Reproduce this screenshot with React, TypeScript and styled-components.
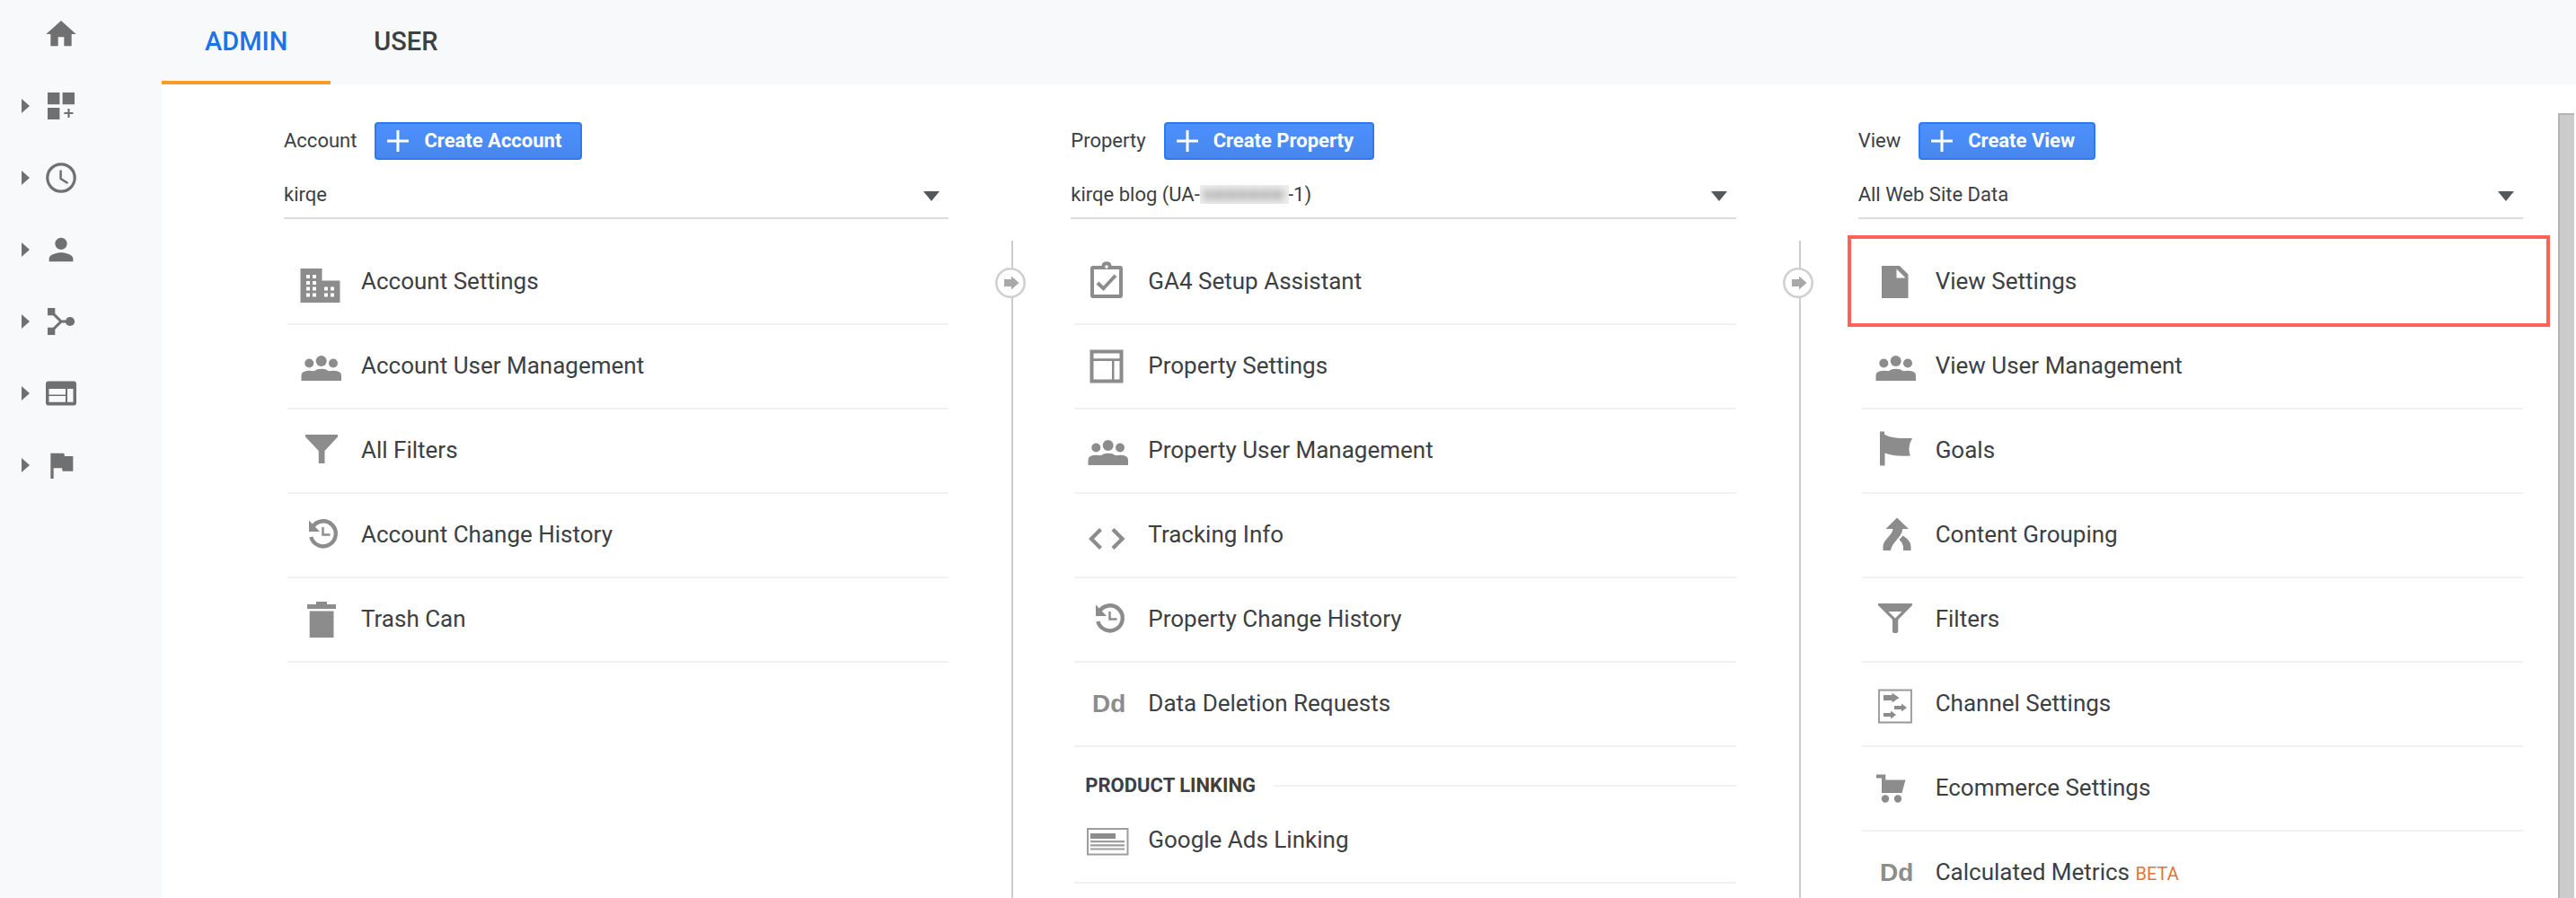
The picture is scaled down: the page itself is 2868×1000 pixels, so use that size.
import React, { useState } from "react";
import styled, { createGlobalStyle, css } from "styled-components";

const ink = "#3c4043";
const iconGrey = "#8c8c8c";
const railGrey = "#707070";

const GlobalStyle = createGlobalStyle`
  *, *::before, *::after { box-sizing: border-box; }
  body {
    margin: 0;
    background: #fff;
    color: ${ink};
    font-family: Roboto, "Liberation Sans", sans-serif;
    font-size: 22px;
  }
`;

const Shell = styled.div`
  display: flex;
  height: 100vh;
  overflow: hidden;
`;

const Rail = styled.nav`
  flex: 0 0 180px;
  display: flex;
  flex-direction: column;
  gap: 40px;
  padding: 18px 0 0 24px;
  background: #f8f9fb;
`;

const RailLink = styled.a`
  display: grid;
  grid-template-columns: 24px 40px;
  align-items: center;
  height: 40px;
  color: ${railGrey};

  > :last-child { grid-column: 2; }
`;

const Main = styled.main`
  flex: 1;
  min-width: 0;
  display: flex;
  flex-direction: column;
`;

const Tabs = styled.nav`
  display: flex;
  background: #f8f9fb;
`;

const Tab = styled.a<{ $active?: boolean }>`
  display: flex;
  align-items: center;
  height: 94px;
  padding: 2px 48px 0;
  border-bottom: 4px solid ${(p) => (p.$active ? "#f99b24" : "transparent")};
  color: ${(p) => (p.$active ? "#1a73e8" : ink)};
  font-size: 29px;
  font-weight: 500;
  text-decoration: none;
`;

const Body = styled.div`
  flex: 1;
  min-height: 0;
  display: flex;
`;

const Columns = styled.div`
  flex: 1;
  min-width: 0;
  display: grid;
  grid-template-columns: 1fr 136px 1fr 136px 1fr;
  padding: 42px 39px 0 136px;
`;

const ScrollThumb = styled.div`
  flex: 0 0 18px;
  margin: 32px 2px 0 0;
  border: solid #b4b4b4;
  border-width: 2px 0 0 2px;
  background: #ccc;
`;

const Column = styled.section`
  min-width: 0;
`;

const ColumnHead = styled.header`
  display: flex;
  align-items: center;
  gap: 20px;
`;

const ColumnLabel = styled.label`
  padding-bottom: 2px;
`;

const CreateButton = styled.button`
  display: flex;
  align-items: center;
  gap: 17px;
  height: 42px;
  padding: 0 21px 0 12px;
  border: 2px solid #3079ed;
  border-radius: 4px;
  background: linear-gradient(#4d90fe, #4787ed);
  color: #fff;
  font: 700 22px Roboto, "Liberation Sans", sans-serif;
  cursor: pointer;
`;

const ButtonText = styled.span`
  padding-bottom: 2px;
`;

const Picker = styled.div`
  position: relative;
  margin-top: 14px;
`;

const PickerSelect = styled.select`
  display: block;
  width: 100%;
  height: 52px;
  padding: 0 0 2px;
  appearance: none;
  border: 0;
  border-bottom: 2px solid #dcdcdc;
  border-radius: 0;
  background: none;
  color: ${ink};
  font: 22px Roboto, "Liberation Sans", sans-serif;
`;

const PickerArrow = styled.svg`
  position: absolute;
  right: 10px;
  top: 21px;
  pointer-events: none;
`;

const Redaction = styled.span`
  position: absolute;
  left: 144px;
  top: 14px;
  width: 99px;
  height: 21px;
  overflow: hidden;
  background: #f0f0f0;
  pointer-events: none;

  &::before {
    content: "";
    position: absolute;
    inset: 5px 4px 4px;
    background: repeating-linear-gradient(90deg, #b4b4b4 0 8px, #cdcdcd 8px 13px);
    filter: blur(4px);
  }
`;

const Divider = styled.div`
  position: relative;
  margin: 132px 0 0 70px;
  border-left: 2px solid #ccc;
`;

const DividerBadge = styled.svg`
  position: absolute;
  left: -20px;
  top: 30px;
`;

const List = styled.ul`
  margin: 24px 0 0;
  padding: 0 0 0 4px;
  list-style: none;
`;

const Item = styled.li<{ $highlight?: boolean }>`
  position: relative;
  border-bottom: 2px solid #f1f1f1;

  ${(p) =>
    p.$highlight &&
    css`
      &::after {
        content: "";
        position: absolute;
        inset: -6px -30px -4px -16px;
        border: 4px solid #ff6257;
        pointer-events: none;
      }
    `}
`;

const ItemLink = styled.a`
  display: flex;
  align-items: center;
  gap: 18px;
  height: 92px;
  padding-left: 12px;
  color: ${ink};
  font-size: 26px;
  text-decoration: none;
`;

const ItemIcon = styled.svg`
  flex: none;
  color: ${iconGrey};
`;

const ItemText = styled.span`
  padding-bottom: 2px;
`;

const Beta = styled.span`
  color: #e37435;
  font-size: 20px;
`;

const SectionTitle = styled.h3`
  display: flex;
  align-items: center;
  gap: 20px;
  margin: 0;
  padding: 30px 0 2px 12px;
  font-size: 22px;
  line-height: 26px;
  font-weight: 700;

  &::after {
    content: "";
    flex: 1;
    height: 2px;
    background: #f1f1f1;
  }
`;

const DdGlyph = () => (
  <text
    x="8"
    y="33"
    fontFamily='"Liberation Sans", sans-serif'
    fontSize="28"
    fontWeight="700"
    fill="currentColor"
  >
    Dd
  </text>
);

const icons: Record<string, React.ReactNode> = {
  building: (
    <path
      fillRule="evenodd"
      d="M2.500 9H26.500V22.500H46.500V47H2.500zM9 16v4h4v-4zM16 16v4h4v-4zM9 23v4h4v-4zM16 23v4h4v-4zM9 29.500v4h4v-4zM16 29.500v4h4v-4zM9 36.500v4h4v-4zM16 36.500v4h4v-4zM29 29.500v4h4v-4zM36 29.500v4h4v-4zM29 36.500v4h4v-4zM36 36.500v4h4v-4z"
    />
  ),
  people: (
    <>
      <circle cx="12.300" cy="20.500" r="5" />
      <circle cx="25.700" cy="18" r="6" />
      <circle cx="39" cy="20.500" r="5" />
      <path d="M3.500 40V34Q3.500 29 12 28.700Q16 28.700 17.500 29.200Q21 26.800 26 26.800Q31 26.800 34 29.200Q36 28.700 39.500 28.700Q48 29 48 34V40z" />
    </>
  ),
  funnel: <path d="M8 6H44V8.500L29.500 24V38H22.800V24L8 8.500z" />,
  history: (
    <>
      <path
        d="M15.600 15.500A14 14 0 1 1 14.300 26"
        fill="none"
        stroke="currentColor"
        strokeWidth="4.400"
      />
      <path d="M12 7.500L24 20H12z" />
      <path d="M27.500 15V23.500H35.500" fill="none" stroke="currentColor" strokeWidth="2.400" />
    </>
  ),
  trash: <path d="M10 7H20V4H32V7H42V12H10zM12.700 14.500H39.500V44H12.700z" />,
  clipboard: (
    <path
      fillRule="evenodd"
      d="M9 6H18.500A5.500 4.800 0 0 1 29.500 6H39A3 3 0 0 1 42 9V39A3 3 0 0 1 39 42H9A3 3 0 0 1 6 39V9A3 3 0 0 1 9 6zM24 5.200a1.800 1.800 0 1 0 .01 0zM10 10V38H38V10zM12.500 26.500L15.500 23.500L20.500 28.500L32.500 15.500L35.500 18L20.500 34z"
    />
  ),
  layout: (
    <path fillRule="evenodd" d="M5.500 5.500H42.500V42.500H5.500zM9.500 9.500V15.300H38.500V9.500zM9.500 18V38.500H30V18zM32.500 18V38.500H38.500V18z" />
  ),
  code: (
    <path
      d="M17.500 17.500L7 28L17.500 38.500M31 17.500L41.500 28L31 38.500"
      fill="none"
      stroke="currentColor"
      strokeWidth="4.200"
    />
  ),
  dd: <DdGlyph />,
  ads: (
    <>
      <path d="M3 11H47.500V39.500H3z" fill="none" stroke="currentColor" strokeWidth="2" opacity=".85" />
      <path d="M6 16H34V22H6z" />
      <path d="M6 25.200H44M6 29.300H44M6 33.500H44" stroke="currentColor" strokeWidth="2.200" opacity=".85" />
    </>
  ),
  doc: <path fillRule="evenodd" d="M10 6H30L39.500 15.500V42H10zM26.500 9.500V19.500H36.500z" />,
  flag: (
    <path d="M8 2.500H13V5.500C20 10.500 33 10 44 10Q38 20 42 29.500C32 30 22 30 13.500 26.500V40.500H8z" />
  ),
  merge: (
    <>
      <path d="M27 4.500L40 17H33.300C32.500 27 21.500 31 20 41H11.500V36C12 29 22 24 22.500 17H14.500z" />
      <path d="M29.500 29L33.500 24.500C40 28.500 42.500 32 42.500 37V41H34V38Q34 33 29.500 29z" />
    </>
  ),
  funnelOpen: (
    <path fillRule="evenodd" d="M6 6H44V8L28.300 24V37Q28.300 39 25 39Q22 39 22 37V24L6 8zM17.500 15L25 22.500L32.500 15z" />
  ),
  channels: (
    <>
      <path d="M7 8.500H43V44.500H7z" fill="none" stroke="currentColor" strokeWidth="1.800" opacity=".9" />
      <path d="M12 14H21.500V11.500L29.500 17L21.500 22.500V20H12zM24 26H32V23.500L38 28L32 32.500V30H24zM12 34H20V31.500L26 36L20 40.500V38H12z" />
    </>
  ),
  cart: (
    <>
      <path d="M4 8.500H14.300V14.500H36.500L32.500 29H10V12.500H4z" />
      <circle cx="14" cy="35.500" r="4.200" />
      <circle cx="28" cy="35.500" r="4.200" />
    </>
  ),
};

const Icon = ({ name }: { name: string }) => (
  <ItemIcon width="52" height="48" viewBox="0 0 52 48" fill="currentColor" aria-hidden="true">
    {icons[name]}
  </ItemIcon>
);

const material = (d: string) => <g transform="scale(1.6667)"><path d={d} /></g>;

const railItems: { label: string; expandable: boolean; art: React.ReactNode }[] = [
  { label: "Home", expandable: false, art: material("M10 20v-6h4v6h5v-8h3L12 3 2 12h3v8z") },
  {
    label: "Customization",
    expandable: true,
    art: <path d="M5 5H18.400V18.300H5zM21.600 5H35V18.300H21.600zM5 22H18.400V35H5zM27.400 23H29.600V26.900H33.400V29.100H29.600V33H27.400V29.100H23.400V26.900H27.400z" />,
  },
  {
    label: "Realtime",
    expandable: true,
    art: (
      <g fill="none" stroke="currentColor">
        <circle cx="20" cy="20" r="15.200" strokeWidth="3.200" />
        <path d="M19.600 11.500V21L27.500 26" strokeWidth="2.500" />
      </g>
    ),
  },
  {
    label: "Audience",
    expandable: true,
    art: material("M12 12c2.210 0 4-1.790 4-4s-1.790-4-4-4-4 1.790-4 4 1.790 4 4 4zm0 2c-2.670 0-8 1.340-8 4v2h16v-2c0-2.660-5.330-4-8-4z"),
  },
  {
    label: "Acquisition",
    expandable: true,
    art: (
      <>
        <path d="M5 5H13.300V13.200H5zM5 26.800H13.300V35H5z" />
        <circle cx="30" cy="20" r="5.100" />
        <path d="M10.500 10.500L20 20L10.500 29.500M19 20H28" fill="none" stroke="currentColor" strokeWidth="3" />
      </>
    ),
  },
  {
    label: "Behavior",
    expandable: true,
    art: (
      <path
        fillRule="evenodd"
        d="M6.300 6.500H33.700A3 3 0 0 1 37 9.500V30.500A3 3 0 0 1 33.700 33.500H6.300A3 3 0 0 1 3 30.500V9.500A3 3 0 0 1 6.300 6.500zM6.500 15V21.500H25V15zM6.500 23V29.700H25V23zM27 15V29.700H33.500V15z"
      />
    ),
  },
  { label: "Conversions", expandable: true, art: material("M14.400 6L14 4H5v17h2v-7h5.600l.4 2h7V6z") },
];

interface Entry {
  icon: string;
  text: string;
  beta?: boolean;
  highlight?: boolean;
}

const Entries = ({ entries }: { entries: Entry[] }) => (
  <>
    {entries.map((e) => (
      <Item key={e.text} $highlight={e.highlight}>
        <ItemLink href="#">
          <Icon name={e.icon} />
          <ItemText>
            {e.text}
            {e.beta && (
              <>
                {" "}
                <Beta>BETA</Beta>
              </>
            )}
          </ItemText>
        </ItemLink>
      </Item>
    ))}
  </>
);

// Non-breaking spaces that hold the width of the hidden account number.
const hiddenNumber = "\u00a0".repeat(18);

interface PanelProps {
  title: string;
  value: string;
  redacted?: boolean;
  children: React.ReactNode;
}

const Panel = ({ title, value, redacted, children }: PanelProps) => {
  const id = `pick-${title.toLowerCase()}`;
  return (
    <Column>
      <ColumnHead>
        <ColumnLabel htmlFor={id}>{title}</ColumnLabel>
        <CreateButton type="button">
          <svg width="24" height="24" viewBox="0 0 24 24" aria-hidden="true">
            <path d="M12 0V24M0 12H24" stroke="#fff" strokeWidth="3" />
          </svg>
          <ButtonText>Create {title}</ButtonText>
        </CreateButton>
      </ColumnHead>
      <Picker>
        <PickerSelect id={id} defaultValue={value}>
          <option value={value}>{value}</option>
        </PickerSelect>
        {redacted && <Redaction />}
        <PickerArrow width="18" height="11" viewBox="0 0 18 11" aria-hidden="true">
          <path d="M0 0H18L9 11z" fill="#54585b" />
        </PickerArrow>
      </Picker>
      <List>{children}</List>
    </Column>
  );
};

const ColumnDivider = () => (
  <Divider>
    <DividerBadge width="34" height="34" viewBox="0 0 34 34" aria-hidden="true">
      <circle cx="17" cy="17" r="15.700" fill="#fff" stroke="#d0d0d0" strokeWidth="2.600" />
      <path d="M10 13H18V9.500L26.500 17L18 24.500V21H10z" fill="#a8a8a8" />
    </DividerBadge>
  </Divider>
);

export default function App() {
  const [tab, setTab] = useState("ADMIN");
  return (
    <>
      <GlobalStyle />
      <Shell>
        <Rail aria-label="Reports">
          {railItems.map((r) => (
            <RailLink key={r.label} href="#" aria-label={r.label}>
              {r.expandable && (
                <svg width="9" height="16" viewBox="0 0 9 16" fill="currentColor" aria-hidden="true">
                  <path d="M0 0L9 8L0 16z" />
                </svg>
              )}
              <svg width="40" height="40" viewBox="0 0 40 40" fill="currentColor" aria-hidden="true">
                {r.art}
              </svg>
            </RailLink>
          ))}
        </Rail>
        <Main>
          <Tabs aria-label="Settings">
            {["ADMIN", "USER"].map((t) => (
              <Tab key={t} href="#" $active={t === tab} onClick={() => setTab(t)}>
                {t}
              </Tab>
            ))}
          </Tabs>
          <Body>
            <Columns>
              <Panel title="Account" value="kirqe">
                <Entries
                  entries={[
                    { icon: "building", text: "Account Settings" },
                    { icon: "people", text: "Account User Management" },
                    { icon: "funnel", text: "All Filters" },
                    { icon: "history", text: "Account Change History" },
                    { icon: "trash", text: "Trash Can" },
                  ]}
                />
              </Panel>
              <ColumnDivider />
              <Panel title="Property" value={`kirqe blog (UA-${hiddenNumber}-1)`} redacted>
                <Entries
                  entries={[
                    { icon: "clipboard", text: "GA4 Setup Assistant" },
                    { icon: "layout", text: "Property Settings" },
                    { icon: "people", text: "Property User Management" },
                    { icon: "code", text: "Tracking Info" },
                    { icon: "history", text: "Property Change History" },
                    { icon: "dd", text: "Data Deletion Requests" },
                  ]}
                />
                <li>
                  <SectionTitle>PRODUCT LINKING</SectionTitle>
                </li>
                <Entries entries={[{ icon: "ads", text: "Google Ads Linking" }]} />
              </Panel>
              <ColumnDivider />
              <Panel title="View" value="All Web Site Data">
                <Entries
                  entries={[
                    { icon: "doc", text: "View Settings", highlight: true },
                    { icon: "people", text: "View User Management" },
                    { icon: "flag", text: "Goals" },
                    { icon: "merge", text: "Content Grouping" },
                    { icon: "funnelOpen", text: "Filters" },
                    { icon: "channels", text: "Channel Settings" },
                    { icon: "cart", text: "Ecommerce Settings" },
                    { icon: "dd", text: "Calculated Metrics", beta: true },
                  ]}
                />
              </Panel>
            </Columns>
            <ScrollThumb />
          </Body>
        </Main>
      </Shell>
    </>
  );
}
